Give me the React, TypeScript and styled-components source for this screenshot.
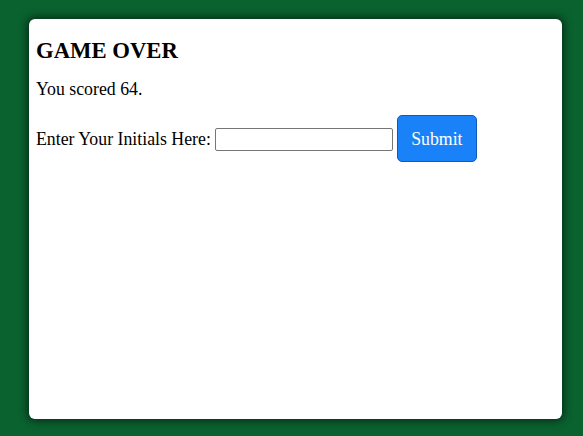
import React from "react";
import styled, { createGlobalStyle } from "styled-components";

const GlobalStyle = createGlobalStyle`
    html, body {
        margin: 0;
        padding: 0;
        background: #0a622f;
    }
    body {
        font-family: "Liberation Serif", "Times New Roman", serif;
    }
`;

const Page = styled.div`
    box-sizing: border-box;
    width: 583px;
    height: 436px;
    padding: 19px 21px 17px 29px;
`;

const Card = styled.main`
    box-sizing: border-box;
    height: 400px;
    background: #ffffff;
    border-radius: 6px;
    box-shadow: 0 0 8px 2px rgba(0, 0, 0, 0.55);
    padding: 1px 7px;
    color: #000000;
    font-size: 17.8px;
    line-height: 20px;
`;

const Heading = styled.h3`
    font-size: 22.7px;
    line-height: 26px;
    font-weight: 700;
    margin: 18px 0 15px;
`;

const Score = styled.p`
    margin: 0 0 16px;
`;

const Form = styled.form`
    display: flex;
    align-items: center;
    gap: 4px;
`;

const Label = styled.label``;

const Input = styled.input`
    box-sizing: border-box;
    width: 178px;
    height: 23px;
    margin-top: 1px;
    border: 1px solid #767676;
    border-radius: 2px;
    font: inherit;
`;

const Button = styled.button`
    box-sizing: border-box;
    width: 80px;
    height: 47px;
    background: #1a82f8;
    color: #ffffff;
    border: 1px solid #0f5cb8;
    border-radius: 5px;
    font: inherit;
    cursor: pointer;
`;

export default function App() {
    return (
        <>
            <GlobalStyle />
            <Page>
                <Card>
                    <Heading>GAME OVER</Heading>
                    <Score>You scored 64.</Score>
                    <Form onSubmit={e => e.preventDefault()}>
                        <Label htmlFor="initials">Enter Your Initials Here:</Label>
                        <Input id="initials" type="text" />
                        <Button type="submit">Submit</Button>
                    </Form>
                </Card>
            </Page>
        </>
    );
}
